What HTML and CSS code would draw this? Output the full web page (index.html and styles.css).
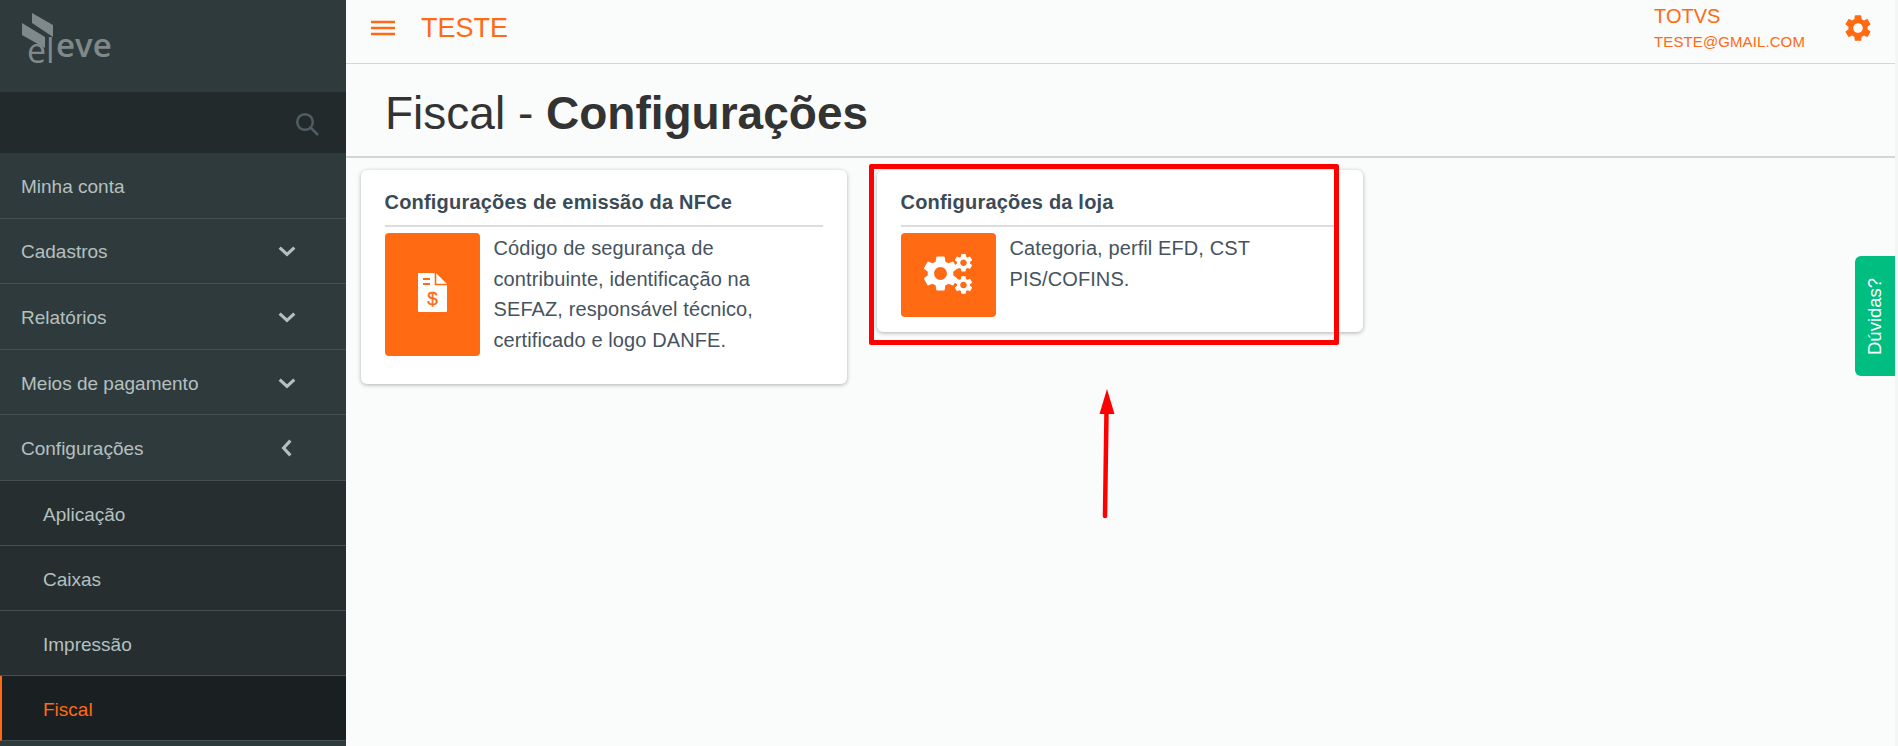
FILE: index.html
```html
<!DOCTYPE html>
<html lang="pt-BR">
<head>
    <meta charset="UTF-8">
    <title>Fiscal - Configurações</title>
    <link rel="stylesheet" href="styles.css">
</head>
<body>
<svg class="defs" width="0" height="0">
    <symbol id="gear" viewBox="0 0 24 24">
        <path d="M19.14 12.94c.04-.3.06-.61.06-.94 0-.32-.02-.64-.07-.94l2.03-1.58c.18-.14.23-.41.12-.61l-1.92-3.32c-.12-.22-.37-.29-.59-.22l-2.39.96c-.5-.38-1.03-.7-1.62-.94l-.36-2.54c-.04-.24-.24-.41-.48-.41h-3.84c-.24 0-.43.17-.47.41l-.36 2.54c-.59.24-1.13.57-1.62.94l-2.39-.96c-.22-.08-.47 0-.59.22L2.74 8.87c-.12.21-.08.47.12.61l2.03 1.58c-.05.3-.09.63-.09.94s.02.64.07.94l-2.03 1.58c-.18.14-.23.41-.12.61l1.92 3.32c.12.22.37.29.59.22l2.39-.96c.5.38 1.03.7 1.62.94l.36 2.54c.05.24.24.41.48.41h3.84c.24 0 .44-.17.47-.41l.36-2.54c.59-.24 1.13-.56 1.62-.94l2.39.96c.22.08.47 0 .59-.22l1.92-3.32c.12-.22.07-.47-.12-.61l-2.01-1.58zM12 15.6c-1.98 0-3.6-1.62-3.6-3.6s1.62-3.6 3.6-3.6 3.6 1.62 3.6 3.6-1.62 3.6-3.6 3.6z"/>
    </symbol>
</svg>

<div class="layout">
    <!-- Sidebar -->
    <aside class="sidebar">
        <div class="logo">
            <svg width="110" height="66" viewBox="0 0 110 66">
                <path class="logo-mark" d="M17 5 L38 17 V29 L17 15 Z"/>
                <path class="logo-mark" d="M7 15 L30 29 V40 L7 27 Z"/>
                <text class="logo-big" x="12" y="55">el</text>
                <text class="logo-small" x="41" y="49">eve</text>
            </svg>
        </div>
        <div class="search">
            <svg width="26" height="26" viewBox="0 0 26 26">
                <circle cx="11" cy="12" r="7.8"/>
                <path d="M16.5 17.5 L24 25"/>
            </svg>
        </div>
        <nav class="menu">
            <a class="menu-item">Minha conta</a>
            <a class="menu-item">Cadastros
                <svg class="chev" viewBox="0 0 16 16"><path d="M1.5 5 L8 11 L14.5 5"/></svg></a>
            <a class="menu-item">Relatórios
                <svg class="chev" viewBox="0 0 16 16"><path d="M1.5 5 L8 11 L14.5 5"/></svg></a>
            <a class="menu-item">Meios de pagamento
                <svg class="chev" viewBox="0 0 16 16"><path d="M1.5 5 L8 11 L14.5 5"/></svg></a>
            <a class="menu-item">Configurações
                <svg class="chev" viewBox="0 0 16 16"><path d="M11 1.5 L5 8 L11 14.5"/></svg></a>
            <a class="menu-item sub">Aplicação</a>
            <a class="menu-item sub">Caixas</a>
            <a class="menu-item sub">Impressão</a>
            <a class="menu-item sub active">Fiscal</a>
        </nav>
    </aside>

    <main class="content">
        <header class="topbar">
            <svg class="burger" width="24" height="16" viewBox="0 0 24 16">
                <path d="M0 2 H24 M0 8 H24 M0 14 H24"/>
            </svg>
            <span class="store">TESTE</span>
            <div class="user">
                <div class="user-name">TOTVS</div>
                <div class="user-mail">TESTE@GMAIL.COM</div>
            </div>
            <svg class="settings" width="32" height="32"><use href="#gear"/></svg>
        </header>

        <div class="page-title">
            <h1>Fiscal - <b>Configurações</b></h1>
        </div>

        <section class="cards">
            <article class="card">
                <h2>Configurações de emissão da NFCe</h2>
                <div class="card-body">
                    <div class="card-icon tall">
                        <svg class="doc-icon" width="29" height="39" viewBox="0 0 29 39">
                            <path class="doc" d="M1 0 H18 L29 11 V38 Q29 39 28 39 H1 Q0 39 0 38 V1 Q0 0 1 0 Z"/>
                            <path class="doc-cut" d="M17.5 0 V11.5 H29"/>
                            <path class="doc-line" d="M5 6 H12 M5 11 H12"/>
                            <text class="doc-sign" x="14.5" y="32">$</text>
                        </svg>
                    </div>
                    <p>Código de segurança de contribuinte, identificação na SEFAZ, responsável técnico, certificado e logo DANFE.</p>
                </div>
            </article>
            <article class="card">
                <h2>Configurações da loja</h2>
                <div class="card-body">
                    <div class="card-icon">
                        <svg width="50" height="42" viewBox="0 0 50 42">
                            <use href="#gear" x="-3.8" y="-1.8" width="42.6" height="42.6"/>
                            <use href="#gear" x="29.5" y="-2.3" width="22" height="22"/>
                            <use href="#gear" x="29.5" y="20" width="22" height="22"/>
                        </svg>
                    </div>
                    <p>Categoria, perfil EFD, CST PIS/COFINS.</p>
                </div>
            </article>
        </section>
    </main>
</div>

<a class="help-tab">Dúvidas?</a>

<!-- Marcacao vermelha -->
<div class="red-box"></div>
<svg class="red-arrow" width="20" height="132" viewBox="0 0 20 132">
    <path d="M9.5 22 L8 127" />
    <polygon points="10,0 2.5,25 17.5,25"/>
</svg>
</body>
</html>
```

FILE: styles.css
```css
* { box-sizing: border-box; }
html, body { height: 100%; }
body {
  margin: 0;
  font-family: 'Liberation Sans', Arial, sans-serif;
  background: #f4f5f5;
  overflow: hidden;
}
.defs { position: absolute; }
.layout {
  display: flex;
  width: 1895px;
  height: 746px;
  background: #fafbfb;
}
/* Sidebar */
.sidebar {
  width: 346px;
  flex-shrink: 0;
  background: #2f3a3c;
  overflow: hidden;
}
.logo {
  height: 92px;
  padding: 8px 0 0 15px;
}
.logo svg { display: block; }
.logo-mark { fill: #7f898a; }
.logo-big { font: 34px 'Open Sans', sans-serif; fill: #7f898a; }
.logo-small { font: 600 33px 'Open Sans', sans-serif; fill: #7f898a; }
.search {
  height: 61px;
  background: #232a2c;
  display: flex;
  align-items: center;
  justify-content: flex-end;
  padding-right: 26px;
}
.search svg { fill: none; stroke: #4e5e61; stroke-width: 2.5; }
.menu-item {
  display: flex;
  align-items: center;
  height: 65.6px;
  padding: 3px 50px 0 21px;
  justify-content: space-between;
  font-size: 19px;
  color: #b4c0c0;
  border-bottom: 1px solid #465052;
}
.menu-item.sub {
  background: #262e30;
  padding-top: 4px;
  padding-left: 43px;
  height: 65px;
}
.menu-item.active {
  background: #1a2022;
  color: #ff6a13;
  border-left: 2px solid #ff6a13;
  padding-left: 41px;
}
.chev {
  width: 18px;
  height: 18px;
  margin-top: -2px;
  fill: none;
  stroke: #b4c0c0;
  stroke-width: 2.8;
}
/* Top bar */
.content { flex: 1; min-width: 0; }
.topbar {
  height: 64px;
  display: flex;
  align-items: center;
  padding: 0 21px 7px 25px;
  border-bottom: 1px solid #d4d6d6;
}
.burger { fill: none; stroke: #ff6a13; stroke-width: 2.4; }
.store {
  margin-left: 26px;
  font-size: 27px;
  color: #ff6a13;
}
.user {
  margin-left: auto;
  margin-right: 37px;
  color: #ff6a13;
}
.user-name { font-size: 20px; line-height: 24px; }
.user-mail { font-size: 15px; line-height: 22px; margin-top: 3px; letter-spacing: 0.1px; }
.settings { fill: #ff6a13; }
.page-title {
  height: 94px;
  padding-left: 39px;
  border-bottom: 2px solid #d4d6d6;
}
.page-title h1 {
  margin: 0;
  padding-top: 23px;
  font-size: 46px;
  line-height: 52px;
  font-weight: normal;
  color: #333;
}
/* Cards */
.cards {
  display: flex;
  align-items: flex-start;
  gap: 30px;
  padding: 12px 0 0 15px;
}
.card {
  width: 486px;
  background: #fff;
  border-radius: 6px;
  box-shadow: 0 1px 4px rgba(0,0,0,0.3);
  padding: 22px 24px 15px 23.5px;
}
.card h2 {
  margin: 0;
  font-size: 20px;
  line-height: 21px;
  letter-spacing: 0.2px;
  color: #3a4b57;
  padding-bottom: 12px;
  border-bottom: 2px solid #dddddf;
}
.card-body {
  display: flex;
  gap: 14px;
  margin-top: 6px;
}
.card-icon {
  width: 95px;
  height: 84px;
  flex-shrink: 0;
  background: #ff6a13;
  border-radius: 4px;
  display: flex;
  align-items: center;
  justify-content: center;
}
.card-icon.tall { height: 123px; }
.card-body p {
  margin: 0;
  padding-bottom: 14px;
  font-size: 20px;
  letter-spacing: 0.1px;
  line-height: 30.6px;
  color: #46535e;
  width: 310px;
}
.card-icon svg { fill: #fff; }
.doc-icon { margin-top: -4px; }
.doc { fill: #fff; }
.doc-cut { fill: none; stroke: #ff6a13; stroke-width: 1.6; }
.doc-line { fill: none; stroke: #ff6a13; stroke-width: 2; }
.doc-sign {
  font: 19px 'Liberation Sans', sans-serif;
  fill: #ff6a13;
  stroke: #ff6a13;
  stroke-width: 0.4;
  text-anchor: middle;
}
/* Overlays */
.help-tab {
  position: absolute;
  left: 1855px;
  top: 256px;
  width: 40px;
  height: 120px;
  background: #00bd80;
  color: #fff;
  font-size: 18.5px;
  display: flex;
  align-items: center;
  justify-content: center;
  writing-mode: vertical-rl;
  transform: rotate(180deg);
  border-radius: 0 6px 6px 0;
}
.red-box {
  position: absolute;
  left: 869px;
  top: 164px;
  width: 470px;
  height: 181px;
  border: 5px solid #fe0000;
  border-radius: 2px;
}
.red-arrow {
  position: absolute;
  left: 1097px;
  top: 389px;
}
.red-arrow path { fill: none; stroke: #fe0000; stroke-width: 4.5; stroke-linecap: round; }
.red-arrow polygon { fill: #fe0000; }
```
